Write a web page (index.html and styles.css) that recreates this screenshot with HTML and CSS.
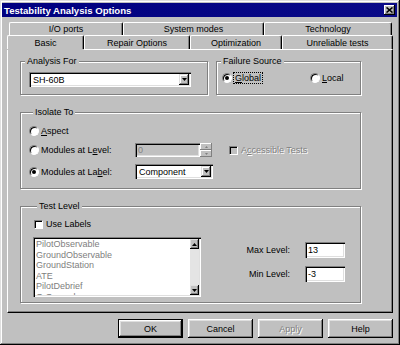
FILE: index.html
```html
<!DOCTYPE html>
<html lang="en">
<head>
    <meta charset="UTF-8">
    <meta name="viewport" content="width=device-width, initial-scale=1.0">
    <title>Testability Analysis Options</title>
    <link rel="stylesheet" href="styles.css">
</head>
<body>
    <div class="window">
        <div class="titlebar">
            <span class="title">Testability Analysis Options</span>
            <span class="close-btn">
                <svg width="7" height="6" viewBox="0 0 7 6"><path d="M0.5 0.5L6.5 5.5M6.5 0.5L0.5 5.5" stroke="#000" stroke-width="1.6"/></svg>
            </span>
        </div>

        <div class="dialog-body">
            <div class="tab-row back">
                <div class="tab w-io">I/O ports</div>
                <div class="tab w-sys">System modes</div>
                <div class="tab w-tech">Technology</div>
            </div>
            <div class="tab-row front">
                <div class="tab active w-basic">Basic</div>
                <div class="tab w-repair">Repair Options</div>
                <div class="tab w-opt">Optimization</div>
                <div class="tab w-unrel">Unreliable tests</div>
            </div>

            <div class="panel">
                <div class="group-row">
                    <div class="group analysis">
                        <div class="group-title">Analysis For</div>
                        <div class="select analysis-select">
                            <span class="select-text">SH-60B</span>
                            <span class="drop-btn"><svg width="5" height="3" viewBox="0 0 5 3"><path d="M0 0H5L2.5 3z" fill="#000"/></svg></span>
                        </div>
                    </div>
                    <div class="group source">
                        <div class="group-title">Failure Source</div>
                        <div class="source-line">
                            <div class="opt global"><span class="radio checked"></span><span class="focus"><u>G</u>lobal</span></div>
                            <div class="opt"><span class="radio"></span><span><u>L</u>ocal</span></div>
                        </div>
                    </div>
                </div>

                <div class="group isolate">
                    <div class="group-title">Isolate To</div>
                    <div class="iso-row first">
                        <span class="radio"></span><span class="opt-text"><u>A</u>spect</span>
                    </div>
                    <div class="iso-row">
                        <span class="radio"></span><span class="opt-text fixed">Modules at L<u>e</u>vel:</span>
                        <div class="num-input disabled">0</div>
                        <div class="spin">
                            <span class="spin-btn"><svg width="3" height="2" viewBox="0 0 3 2"><path d="M0 2H3L1.5 0z" fill="#808080"/></svg></span>
                            <span class="spin-btn"><svg width="3" height="2" viewBox="0 0 3 2"><path d="M0 0H3L1.5 2z" fill="#808080"/></svg></span>
                        </div>
                        <div class="check-opt accessible"><span class="checkbox disabled"></span><span class="disabled-text">A<u>c</u>cessible Tests</span></div>
                    </div>
                    <div class="iso-row last">
                        <span class="radio checked"></span><span class="opt-text fixed">Modules at La<u>b</u>el:</span>
                        <div class="select component-select">
                            <span class="select-text">Component</span>
                            <span class="drop-btn"><svg width="5" height="3" viewBox="0 0 5 3"><path d="M0 0H5L2.5 3z" fill="#000"/></svg></span>
                        </div>
                    </div>
                </div>

                <div class="group test-level">
                    <div class="group-title">Test Level</div>
                    <div class="level-body">
                        <div class="level-left">
                            <div class="check-opt use-labels"><span class="checkbox"></span><span>Use Labels</span></div>
                            <div class="listbox">
                                <div class="list-items">
                                    <div>PilotObservable</div>
                                    <div>GroundObservable</div>
                                    <div>GroundStation</div>
                                    <div>ATE</div>
                                    <div>PilotDebrief</div>
                                    <div>G.Ground</div>
                                </div>
                                <div class="scrollbar">
                                    <span class="scroll-btn"><svg width="5" height="3" viewBox="0 0 5 3"><path d="M0 3H5L2.5 0z" fill="#000"/></svg></span>
                                    <span class="scroll-track"></span>
                                    <span class="scroll-btn"><svg width="5" height="3" viewBox="0 0 5 3"><path d="M0 0H5L2.5 3z" fill="#000"/></svg></span>
                                </div>
                            </div>
                        </div>
                        <div class="level-fields">
                            <span class="field-label">Max Level:</span>
                            <div class="text-input">13</div>
                            <span class="field-label">Min Level:</span>
                            <div class="text-input">-3</div>
                        </div>
                    </div>
                </div>
            </div>

            <div class="button-row">
                <button class="default-btn">OK</button>
                <button>Cancel</button>
                <button class="disabled-btn">Apply</button>
                <button>Help</button>
            </div>
        </div>
    </div>
</body>
</html>
```

FILE: styles.css
```css
body {
    margin: 0;
    font-family: "Liberation Sans", Arial, sans-serif;
    font-size: 9px;
    color: #000;
    background: #c0c0c0;
}
.window {
    box-sizing: border-box;
    width: 400px;
    height: 345px;
    padding: 3px 3px 0 2px;
    background: #c0c0c0;
    overflow: hidden;
    box-shadow: inset -1px -1px 0 #000, inset 1px 1px 0 #dfdfdf, inset -2px -2px 0 #808080, inset 2px 2px 0 #fff;
}
.titlebar {
    height: 14px;
    background: linear-gradient(to right, #000080, #0a0a88);
    display: flex;
    align-items: center;
    justify-content: space-between;
    padding: 0 2px;
}
.title {
    color: #fff;
    font-weight: bold;
    font-size: 9.6px;
}
.close-btn {
    box-sizing: border-box;
    width: 11px;
    height: 10px;
    display: flex;
    align-items: center;
    justify-content: center;
    background: #c0c0c0;
    box-shadow: inset -1px -1px 0 #000, inset 1px 1px 0 #fff, inset -2px -2px 0 #808080;
}
.dialog-body {
    margin-left: 5px;
    width: 386px;
}

/* tabs */
.tab-row {
    display: flex;
}
.tab-row.back {
    margin-top: 5px;
    height: 13px;
    padding-left: 2px;
}
.tab-row.front {
    height: 14px;
}
.tab {
    box-sizing: border-box;
    display: flex;
    align-items: center;
    justify-content: center;
    border-top: 1px solid #fff;
    border-left: 1px solid #fff;
    border-right: 1px solid #000;
    border-radius: 2px 2px 0 0;
    box-shadow: inset -1px 0 0 #808080;
}
.tab.active {
    position: relative;
    z-index: 1;
    box-shadow: inset -1px 0 0 #808080, 0 1px 0 #c0c0c0;
}
.w-io { width: 114px; }
.w-sys { width: 141px; }
.w-tech { width: 128px; }
.w-basic { width: 77px; }
.w-repair { width: 106px; }
.w-opt { width: 92px; }
.w-unrel { width: 111px; }

/* panel */
.panel {
    box-sizing: border-box;
    height: 264px;
    padding: 11px 0 0 12px;
    border-top: 1px solid #fff;
    border-left: 1px solid #fff;
    border-right: 1px solid #000;
    border-bottom: 1px solid #000;
    box-shadow: inset -1px -1px 0 #808080;
}
.group {
    box-sizing: border-box;
    border: 1px solid #808080;
    box-shadow: inset 1px 1px 0 #fff, 1px 1px 0 #fff;
}
.group-title {
    width: fit-content;
    margin: -7px 0 0 4px;
    padding: 0 2px;
    line-height: 13px;
    background: #c0c0c0;
}
.group-row {
    display: flex;
    gap: 8px;
}
.analysis {
    width: 188px;
    height: 34px;
}
.source {
    width: 145px;
    height: 34px;
}
.isolate {
    margin-top: 17px;
    width: 341px;
    height: 77px;
    padding-left: 8px;
}
.test-level {
    margin-top: 17px;
    width: 341px;
    height: 97px;
    padding-left: 12px;
}

/* controls */
.select {
    box-sizing: border-box;
    display: flex;
    align-items: stretch;
    background: #fff;
    padding: 2px;
    box-shadow: inset 1px 1px 0 #808080, inset 2px 2px 0 #000, inset -1px -1px 0 #fff, inset -2px -2px 0 #dfdfdf;
}
.select-text {
    flex: 1;
    padding-left: 2px;
    display: flex;
    align-items: center;
}
.drop-btn {
    box-sizing: border-box;
    width: 10px;
    display: flex;
    align-items: center;
    justify-content: center;
    background: #c0c0c0;
    box-shadow: inset -1px -1px 0 #000, inset 1px 1px 0 #dfdfdf, inset -2px -2px 0 #808080, inset 2px 2px 0 #fff;
}
.analysis-select {
    margin: 4px 0 0 8px;
    width: 162px;
    height: 15px;
}
.component-select {
    width: 78px;
    height: 15px;
}
.radio {
    box-sizing: border-box;
    flex: none;
    width: 10px;
    height: 10px;
    border-radius: 50%;
    background: #fff;
    border: 1px solid;
    border-color: #808080 #fff #fff #808080;
    box-shadow: inset 1px 1px 0 #000;
    display: inline-flex;
    align-items: center;
    justify-content: center;
    margin-right: 2px;
}
.radio.checked::after {
    content: "";
    width: 4px;
    height: 4px;
    border-radius: 50%;
    background: #000;
}
.checkbox {
    box-sizing: border-box;
    flex: none;
    width: 9px;
    height: 9px;
    background: #fff;
    border: 1px solid;
    border-color: #808080 #fff #fff #808080;
    box-shadow: inset 1px 1px 0 #000;
    margin-right: 3px;
}
.checkbox.disabled {
    background: #c0c0c0;
}
.disabled-text {
    color: #808080;
    text-shadow: 1px 1px 0 #fff;
}
.source-line {
    display: flex;
    margin: 4px 0 0 5px;
    height: 12px;
}
.opt {
    display: flex;
    align-items: center;
}
.opt.global {
    width: 88px;
}
.focus {
    outline: 1px dotted #000;
    padding: 0 1px;
}
.iso-row {
    display: flex;
    align-items: center;
    height: 14px;
    margin-top: 5px;
}
.iso-row.last {
    height: 15px;
    margin-top: 7px;
}
.opt-text.fixed {
    width: 94px;
}
.num-input {
    box-sizing: border-box;
    width: 65px;
    height: 14px;
    padding: 0 3px;
    display: flex;
    align-items: center;
    background: #fff;
    box-shadow: inset 1px 1px 0 #808080, inset 2px 2px 0 #000, inset -1px -1px 0 #fff, inset -2px -2px 0 #dfdfdf;
}
.num-input.disabled {
    background: #c0c0c0;
    color: #808080;
}
.spin {
    display: flex;
    flex-direction: column;
    width: 12px;
    height: 14px;
}
.spin-btn {
    flex: 1;
    display: flex;
    align-items: center;
    justify-content: center;
    background: #c0c0c0;
    box-shadow: inset -1px -1px 0 #808080, inset 1px 1px 0 #fff;
}
.check-opt {
    display: flex;
    align-items: center;
}
.accessible {
    margin-left: 17px;
}

/* test level */
.level-body {
    display: flex;
}
.use-labels {
    margin: 5px 0 0 1px;
    height: 12px;
}
.listbox {
    box-sizing: border-box;
    display: flex;
    margin-top: 7px;
    width: 168px;
    height: 60px;
    padding: 2px;
    background: #fff;
    box-shadow: inset 1px 1px 0 #808080, inset 2px 2px 0 #000, inset -1px -1px 0 #fff, inset -2px -2px 0 #dfdfdf;
}
.list-items {
    flex: 1;
    overflow: hidden;
    padding-left: 1px;
    line-height: 10.5px;
    color: #808080;
}
.scrollbar {
    width: 9px;
    display: flex;
    flex-direction: column;
}
.scroll-btn {
    box-sizing: border-box;
    height: 10px;
    display: flex;
    align-items: center;
    justify-content: center;
    background: #c0c0c0;
    box-shadow: inset -1px -1px 0 #000, inset 1px 1px 0 #dfdfdf, inset -2px -2px 0 #808080;
}
.scroll-track {
    flex: 1;
    background: #e4e4e4;
}
.level-fields {
    margin: 29px 15px 0 auto;
    display: grid;
    grid-template-columns: auto 40px;
    column-gap: 15px;
    row-gap: 8px;
    align-items: center;
    align-self: flex-start;
}
.field-label {
    text-align: right;
}
.text-input {
    box-sizing: border-box;
    height: 16px;
    padding: 0 3px;
    display: flex;
    align-items: center;
    background: #fff;
    box-shadow: inset 1px 1px 0 #808080, inset 2px 2px 0 #000, inset -1px -1px 0 #fff, inset -2px -2px 0 #dfdfdf;
}

/* buttons */
.button-row {
    display: flex;
    justify-content: flex-end;
    gap: 5px;
    margin-top: 6px;
}
button {
    box-sizing: border-box;
    width: 65px;
    height: 19px;
    padding: 0;
    border: none;
    font-family: inherit;
    font-size: 9px;
    color: #000;
    background: #c0c0c0;
    box-shadow: inset -1px -1px 0 #000, inset 1px 1px 0 #fff, inset -2px -2px 0 #808080, inset 2px 2px 0 #dfdfdf;
}
.default-btn {
    border: 1px solid #000;
}
.disabled-btn {
    color: #808080;
    text-shadow: 1px 1px 0 #fff;
}
```
